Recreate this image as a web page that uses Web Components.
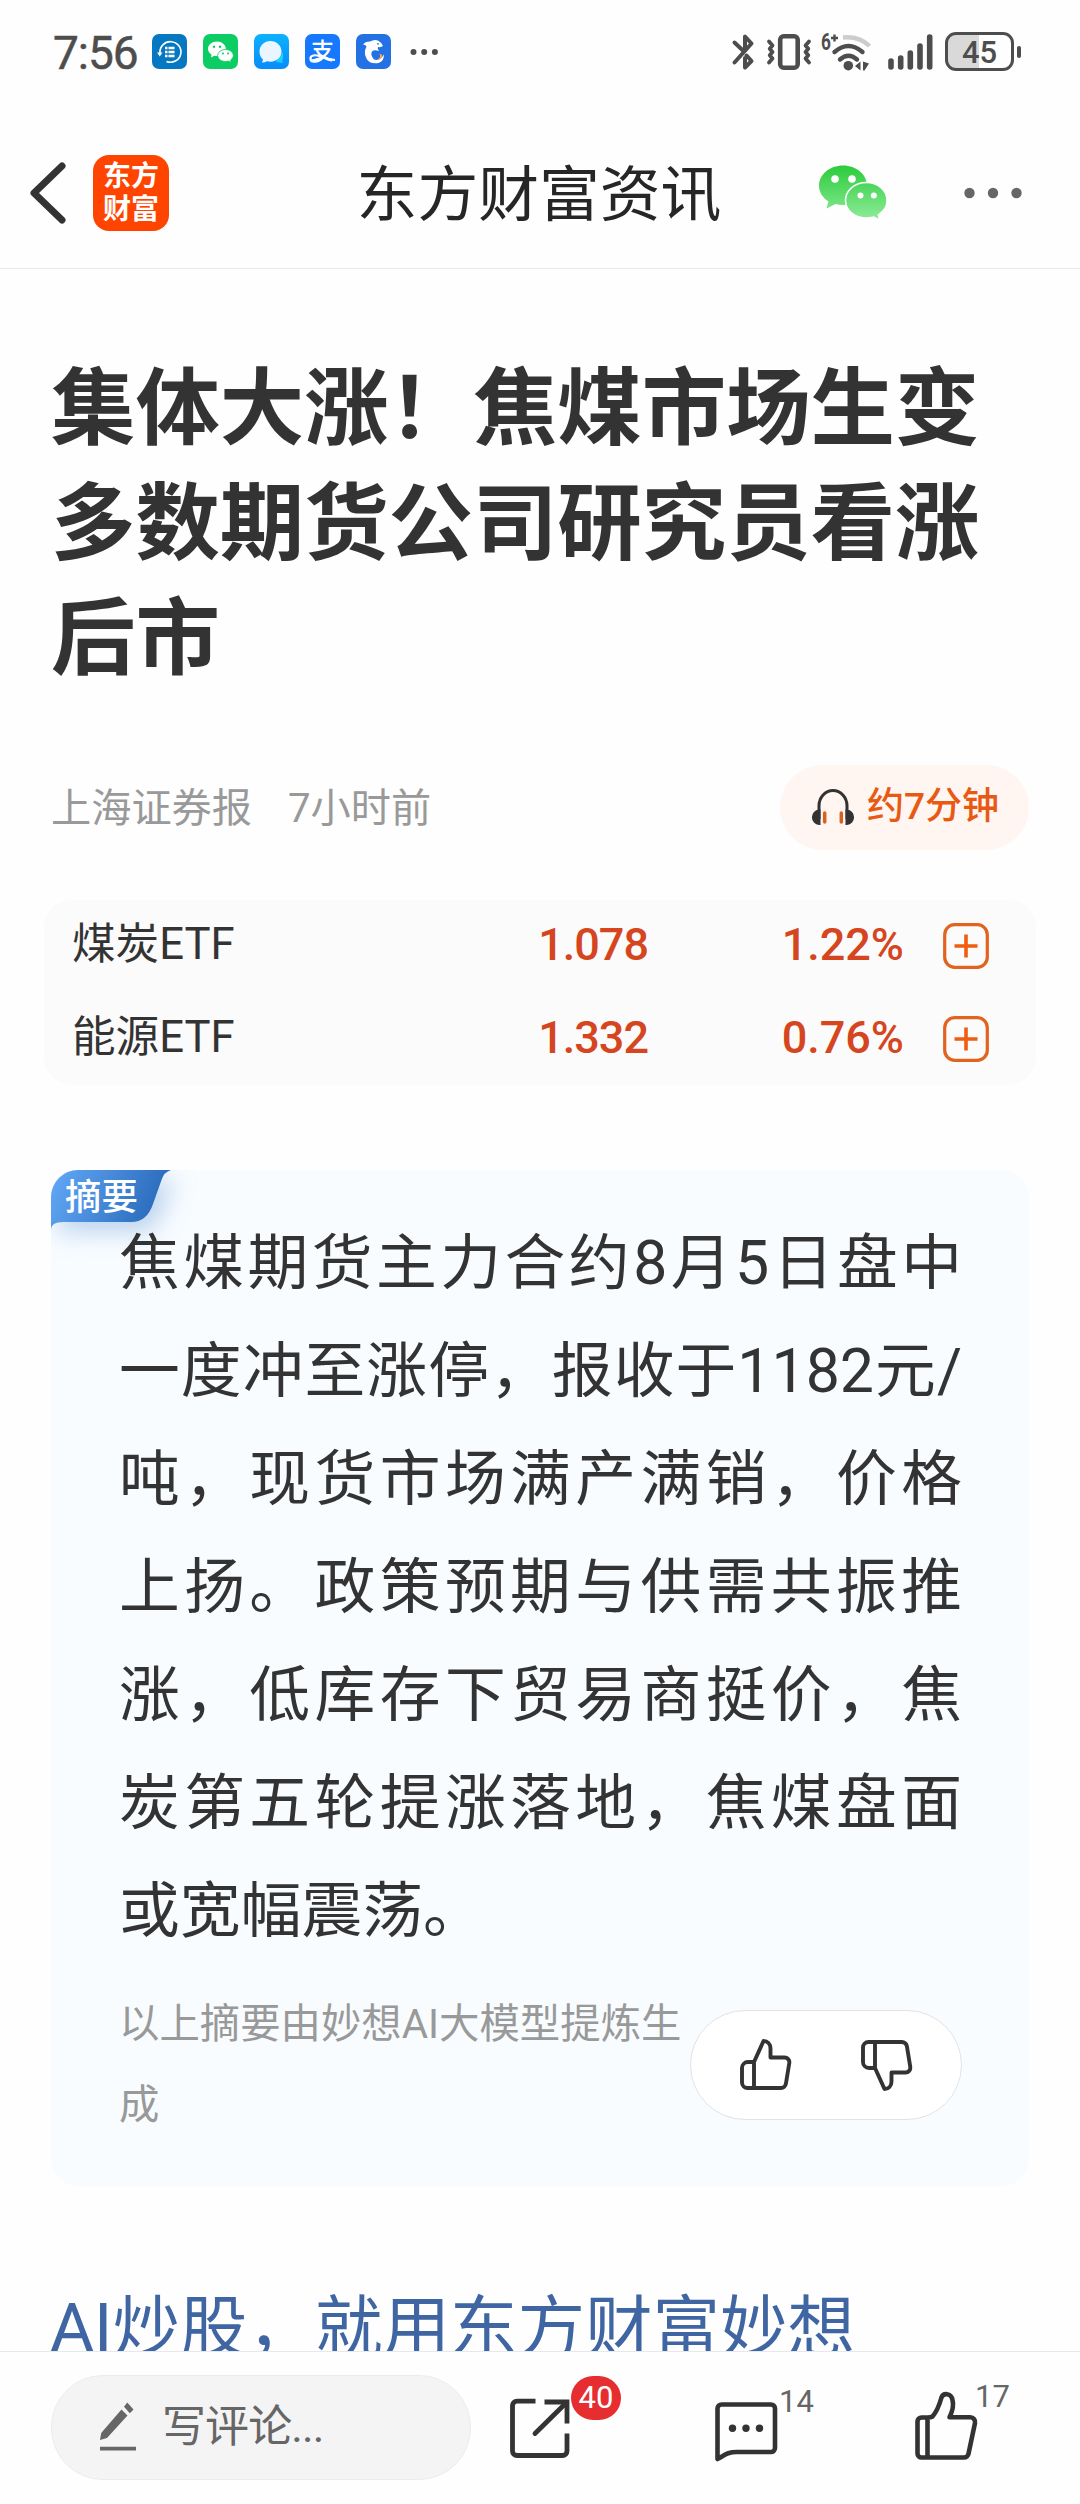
<!DOCTYPE html>
<html lang="zh-CN">
<head>
<meta charset="utf-8">
<title>东方财富资讯</title>
<style>
  html, body { margin: 0; padding: 0; }
  body {
    width: 1080px;
    height: 2504px;
    overflow: hidden;
    background: #fefefe;
    color: #333333;
    font-family: Roboto, "Noto Sans CJK SC", sans-serif;
    text-spacing-trim: space-all;
    text-autospace: no-autospace;
  }
</style>
</head>
<body>
<news-page>
  <status-bar slot="top" time="7:56" battery="45"></status-bar>
  <nav-bar slot="top">东方财富资讯</nav-bar>
  <article-head source="上海证券报" time="7小时前" duration="约7分钟">集体大涨！焦煤市场生变 多数期货公司研究员看涨后市</article-head>
  <quote-list>
    <quote-row name="煤炭ETF" price="1.078" change="1.22%"></quote-row>
    <quote-row name="能源ETF" price="1.332" change="0.76%"></quote-row>
  </quote-list>
  <summary-card label="摘要">
    焦煤期货主力合约8月5日盘中一度冲至涨停，报收于1182元/吨，现货市场满产满销，价格上扬。政策预期与供需共振推涨，低库存下贸易商挺价，焦炭第五轮提涨落地，焦煤盘面或宽幅震荡。
    <span slot="note">以上摘要由妙想AI大模型提炼生成</span>
  </summary-card>
  <promo-link>AI炒股，就用东方财富妙想</promo-link>
  <comment-bar slot="bottom" placeholder="写评论..."></comment-bar>
</news-page>

<script>
const ICONS = {
    bluetooth: [22, 36, `<path d="M2.5 8.5L12 17.5M2.5 28.5L19.5 9.500L13 2.500V16M13 33.500V24M13 33.500L19.500 27L14.500 21.500" stroke="currentColor" stroke-width="4" stroke-linecap="round" stroke-linejoin="round" fill="none"/>`],
    vibrate: [44, 36, `<g stroke="currentColor" fill="none" stroke-linecap="round" stroke-linejoin="round"><rect x="13.200" y="2.300" width="17.500" height="31.400" rx="3.500" stroke-width="4.600"/><path d="M2 7.500l3.500 4-2.800 3.200 2.800 3.300-2.800 3.300 2.800 3.200-3.500 4M42 7.500l-3.500 4 2.800 3.200-2.800 3.300 2.800 3.300-2.800 3.200 3.500 4" stroke-width="3.800"/></g>`],
    wifi: [52, 38, `<g fill="none" stroke="currentColor" stroke-width="4.400" stroke-linecap="round"><path d="M22 4.500Q38 3 48.500 13" stroke="#cccccc" stroke-linecap="butt"/><path d="M13.500 19Q27.500 7 41.500 19M19 26.500Q27.500 19 36 26.500"/></g><circle cx="27.300" cy="32.700" r="4.800" fill="currentColor"/><path d="M39.500 28.500v9l-5.500-4.500zM42 28.500l6 2-4.500 7h-1.500z" fill="currentColor"/><path d="M10 5h7M13.500 1.500v7" stroke="currentColor" stroke-width="2.400"/><text x="0" y="17" font-size="23" font-weight="700" fill="currentColor" transform="scale(.75 1)">6</text>`],
    signal: [45, 36, `<path d="M3 27v6M12.700 24v9M22.300 19v14M32 12v21M41.700 3v30" stroke="currentColor" stroke-width="5.600" stroke-linecap="round"/>`],
    back: [36, 62, `<path d="M32 4L4 31L32 58" fill="none" stroke="#333333" stroke-width="7" stroke-linecap="round" stroke-linejoin="round"/>`],
    wechat: [68, 56, `<defs><linearGradient id="g" x1="0" y1="0" x2="0" y2="56" gradientUnits="userSpaceOnUse"><stop stop-color="#2bcb3a"/><stop offset="1" stop-color="#90ec9b"/></linearGradient></defs><g fill="url(#g)"><path d="M24 .5C10.700 .5 0 9.500 0 20.700c0 6.500 3.800 12 9.500 15.800L7.500 43.500l9-4.500c2.400.6 5 1 7.500 1 13 0 24-8.500 24-19.500S37.300.5 24 .5z"/><path d="M47.500 17.500C36 17.500 26.500 25.300 26.500 35.500S36 53 47.500 53c2.600 0 5-.4 7.300-1l6.200 3.500-1.700-5.600c5.300-3.300 8.700-8.500 8.700-14.400 0-10.200-9.200-18-20.500-18z" stroke="#ffffff" stroke-width="1.500"/></g><g fill="#ffffff"><circle cx="16" cy="14" r="3.800"/><circle cx="33" cy="14" r="3.800"/><circle cx="41.500" cy="30.500" r="3"/><circle cx="54.800" cy="30.500" r="3"/></g>`],
    more: [58, 12, `<g fill="#666666"><circle cx="5.500" cy="6" r="5.200"/><circle cx="29" cy="6" r="5.200"/><circle cx="52.500" cy="6" r="5.200"/></g>`],
    headphones: [44, 37, `<path d="M8 30V17a14 15.500 0 0 1 28 0v13" fill="none" stroke="#333333" stroke-width="3"/><path d="M9.500 20.500V36H8A8 7.800 0 0 1 8 20.500zM34.500 20.500V36H36A8 7.800 0 0 0 36 20.500z" fill="#333333"/><path d="M13.700 24v9M30.300 24v9" stroke="#d9611f" stroke-width="3.500" stroke-linecap="round"/>`],
    plus: [46, 46, `<path d="M23 11.500v23M11.500 23h23" stroke="#f05c10" stroke-width="3.600"/><rect x="1.700" y="1.700" width="42.600" height="42.600" rx="10" fill="none" stroke="#e0631f" stroke-width="3.200"/>`],
    up: [52, 52, `<path d="M14 23H8a6 6 0 0 0-6 6v14.500a5.500 5.500 0 0 0 5.500 5.500H41a5 5 0 0 0 4.900-4.200L49.300 24a4.800 4.800 0 0 0-4.800-5.500H30.500V9.500C30.500 5 27.500 2 23.500 2L14 23V49" fill="none" stroke="#333333" stroke-width="3.900" stroke-linejoin="round"/>`],
    down: [52, 52, `<path transform="matrix(1 0 0 -1 0 52)" d="M14 23H8a6 6 0 0 0-6 6v14.500a5.500 5.500 0 0 0 5.500 5.500H41a5 5 0 0 0 4.900-4.200L49.300 24a4.800 4.800 0 0 0-4.800-5.500H30.500V9.500C30.500 5 27.500 2 23.500 2L14 23V49" fill="none" stroke="#333333" stroke-width="3.900" stroke-linejoin="round"/>`],
    pencil: [37, 50, `<path d="M0 38L1.200 31L21.500 7.500L27.500 13.500L7 36zM27.200 .5L33.500 7.500L29.800 11.300L24 4.800zM0 44.800h36v3.800H0z" fill="#666666"/>`],
    share: [60, 61, `<path d="M25.500 3.200H7A4.500 4.500 0 0 0 2.500 7.700V53A4.500 4.500 0 0 0 7 57.500H52.500A4.500 4.500 0 0 0 57 53V35.500M34.500 4H57V25.500" fill="none" stroke="#333333" stroke-width="4.800"/><path d="M56 5L25 35.500" stroke="#333333" stroke-width="4.800" stroke-linecap="round"/>`],
    comment: [63, 60, `<path d="M2.500 57V6.500a4 4 0 0 1 4-4h49.500a4 4 0 0 1 4 4V46a4 4 0 0 1-4 4H22c-10 0-12 3-19.500 7z" fill="none" stroke="#333333" stroke-width="4.600" stroke-linejoin="round"/><g fill="#333333"><circle cx="17.500" cy="26.300" r="3.700"/><circle cx="31" cy="26.300" r="3.700"/><circle cx="44.500" cy="26.300" r="3.700"/></g>`],
    like: [63, 69, `<path d="M12.500 25.500H6.500a4 4 0 0 0-4 4V61.500a4 4 0 0 0 4 4H49a4.500 4.500 0 0 0 4.500-3.700L60 31a4.800 4.800 0 0 0-4.700-5.700H34.500Q39.500 15 37.500 8C36 .5 28 .7 26.300 6Q23 18 17.500 24.500 16 25.500 12.500 25.500V65.500" fill="none" stroke="#333333" stroke-width="4.600" stroke-linejoin="round"/>`],
    // launcher icons in the notification area
    backup: [35, 35, `<rect width="35" height="35" rx="7" fill="#0678c2"/><path d="M8 19A10.500 10.300 0 1 1 14.500 27.500" fill="none" stroke="#ffffff" stroke-width="1.600"/><path d="M5 18.500h5.500l-2.700 4z" fill="#ffffff"/><path d="M13 14h2.500M16.500 14h6M13 18h2.500M16.500 18h6M13 22h2.500M16.500 22h6" stroke="#ffffff" stroke-width="2.600"/>`],
    wechatApp: [35, 35, `<rect width="35" height="35" rx="7" fill="#0ccd64"/><g fill="#ffffff"><path d="M14 7.500c-5 0-9 3.300-9 7.300 0 2.500 1.400 4.500 3.500 5.800l-.5 3 3.300-1.800q4 .8 7-.8c3-1.500 4.500-3.500 4.500-6.200 0-4-4-7.300-8.800-7.300z"/><path d="M22.500 15.500c-4.300 0-7.800 2.600-7.800 6s3.500 6 7.800 6l3-.5 2.500 1.500-.4-2.500c1.700-1.200 2.700-2.700 2.700-4.500 0-3.400-3.500-6-7.800-6z" stroke="#0ccd64" stroke-width=".8"/></g><g fill="#0ccd64"><circle cx="11" cy="12.700" r="1.200"/><circle cx="17" cy="12.700" r="1.200"/><circle cx="20" cy="19.500" r="1"/><circle cx="25" cy="19.500" r="1"/></g>`],
    message: [35, 35, `<defs><linearGradient id="m" x2="0" y2="1"><stop stop-color="#0db2fd"/><stop offset="1" stop-color="#078cfb"/></linearGradient></defs><rect width="35" height="35" rx="7" fill="url(#m)"/><path d="M29 18l-7 10 7 1q-1.500-2 0-4.500z" fill="#18d0fb"/><path d="M16.500 7C10.500 7 5.500 11.500 5.500 17.500c0 3.500 1.300 6 3.500 8L8 28.500q3 0 5-1.300c8 2 14.500-3 14.500-9.700C27.500 11.500 22.500 7 16.500 7z" fill="#e9f5ff"/>`],
    alipay: [35, 35, `<rect width="35" height="35" rx="7" fill="#1677ff"/><text x="17.500" y="25" font-size="23" font-weight="500" text-anchor="middle" fill="#ffffff">支</text><path d="M15 22.500c-5-2.500-10-1-9.500 2.500.5 4 8.500 3.500 13-2M16 21.500q7 4 14 4.500" fill="none" stroke="#ffffff" stroke-width="2.200"/>`],
    dolphin: [35, 35, `<rect width="35" height="35" rx="7" fill="#2371e4"/><path d="M7 10.500Q9 7.500 14 7.500Q18 5 22 6.500Q25 8 27 12Q25 13.500 22 13Q21 14.500 23 17Q18 15.500 16 17.500Q14 21 18 25.500Q24 27.500 27.800 20.500Q28.500 27 22.500 29Q15 30.500 11 25.500Q7 19 10.500 12.500Q9.500 10.500 7 10.500z" fill="#ffffff"/><path d="M20.500 26Q25.500 24 23.500 19.500Q27.500 21 26 23.500Q24 26 20.500 26z" fill="#f6a45c"/><circle cx="22" cy="9.800" r=".9" fill="#2371e4"/>`],
    dots: [28, 8, `<g fill="currentColor"><circle cx="3.500" cy="4" r="3"/><circle cx="14.200" cy="4" r="3"/><circle cx="24.900" cy="4" r="3"/></g>`],
    tab: [120, 60, `<defs><linearGradient id="t" x1="0" y1="0" x2="105" y2="45" gradientUnits="userSpaceOnUse"><stop stop-color="#63a9f7"/><stop offset="1" stop-color="#2a6bbb"/></linearGradient></defs><path d="M0 20A20 20 0 0 1 20 0H120Q113 2 110.500 10L102 34Q96 52 80 52H12Q0 52 0 60z" fill="url(#t)"/>`]
};

class NewsIcon extends HTMLElement {
    constructor() {
        super();
        this.attachShadow({ mode: 'open' });
    }

    get type() {
        return this.getAttribute('type');
    }

    connectedCallback() {
        const [w, h, body] = ICONS[this.type];
        this.shadowRoot.innerHTML = `
        <style>
          :host { display: block; flex: none; width: ${w}px; height: ${h}px; }
          svg { display: block; overflow: visible; }
        </style>
        <svg width="${w}" height="${h}" viewBox="0 0 ${w} ${h}">${body}</svg>
      `;
    }
}
customElements.define('news-icon', NewsIcon);

class NewsPage extends HTMLElement {
    constructor() {
        super();
        this.attachShadow({ mode: 'open' }).innerHTML = `
        <style>
          :host { display: flex; flex-direction: column; height: 2504px; }
          main { flex: 1; min-height: 0; overflow: hidden; }
        </style>
        <slot name="top"></slot>
        <main><slot></slot></main>
        <slot name="bottom"></slot>
      `;
    }
}
customElements.define('news-page', NewsPage);

class StatusBar extends HTMLElement {
    connectedCallback() {
        this.attachShadow({ mode: 'open' }).innerHTML = `
        <style>
          :host {
            display: flex;
            align-items: center;
            box-sizing: border-box;
            height: 118px;
            padding: 0 59px 15px 53px;
            color: #4d4d4d;
          }
          .time { width: 99px; padding-top: 2px; font-size: 46px; letter-spacing: -1px; -webkit-text-stroke: .5px #4d4d4d; white-space: nowrap; }
          .apps { display: flex; align-items: center; gap: 16px; flex: 1; }
          .state { display: flex; align-items: center; }
          .battery {
            display: flex;
            align-items: center;
            justify-content: center;
            box-sizing: border-box;
            width: 69px;
            height: 39px;
            margin-left: 12px;
            border: 3px solid #4d4d4d;
            border-radius: 11px;
            background: linear-gradient(90deg, #d9d9d9 50%, transparent 50%);
            font-size: 31px;
            font-weight: 500;
          }
          .battery span { margin-top: 2px; }
          .nub { width: 4px; height: 12px; margin-left: 3px; border-radius: 2px; background: #4d4d4d; }
        </style>
        <span class="time">${this.getAttribute('time')}</span>
        <div class="apps">
          <news-icon type="backup"></news-icon>
          <news-icon type="wechatApp"></news-icon>
          <news-icon type="message"></news-icon>
          <news-icon type="alipay"></news-icon>
          <news-icon type="dolphin"></news-icon>
          <news-icon type="dots" style="margin-left:3px"></news-icon>
        </div>
        <div class="state">
          <news-icon type="bluetooth"></news-icon>
          <news-icon type="vibrate" style="margin-left:13px"></news-icon>
          <news-icon type="wifi" style="margin-left:10px"></news-icon>
          <news-icon type="signal" style="margin-left:15px"></news-icon>
          <div class="battery"><span>${this.getAttribute('battery')}</span></div>
          <span class="nub"></span>
        </div>
      `;
    }
}
customElements.define('status-bar', StatusBar);

class NavBar extends HTMLElement {
    constructor() {
        super();
        this.attachShadow({ mode: 'open' }).innerHTML = `
        <style>
          :host {
            display: grid;
            grid-template-columns: 1fr auto 1fr;
            align-items: center;
            box-sizing: border-box;
            height: 151px;
            padding: 0 58px 0 30px;
            border-bottom: 1px solid #e9e9e9;
          }
          .left { display: flex; align-items: center; gap: 27px; margin-top: -1px; }
          .right { display: flex; align-items: center; justify-content: flex-end; gap: 77px; }
          .logo {
            display: grid;
            align-content: center;
            justify-content: center;
            width: 76px;
            height: 76px;
            border-radius: 16px;
            background: #ff4400;
            color: #ffffff;
            font-size: 28px;
            font-weight: 700;
            line-height: 33px;
          }
          h2 { margin: 5px 0 0 26px; color: #262626; font-size: 60.8px; font-weight: 400; line-height: 80px; }
        </style>
        <div class="left">
          <news-icon type="back"></news-icon>
          <div class="logo"><span>东方</span><span>财富</span></div>
        </div>
        <h2><slot></slot></h2>
        <div class="right">
          <news-icon type="wechat"></news-icon>
          <news-icon type="more"></news-icon>
        </div>
      `;
    }
}
customElements.define('nav-bar', NavBar);

class ArticleHead extends HTMLElement {
    connectedCallback() {
        this.attachShadow({ mode: 'open' }).innerHTML = `
        <style>
          :host { display: block; padding: 83px 51px 0; }
          h1 { width: 940px; margin: 0; font-size: 84.4px; font-weight: 700; line-height: 115px; }
          .meta { display: flex; align-items: center; height: 85px; margin-top: 68px; color: #999999; font-size: 40.2px; }
          .meta > span { margin-top: -7px; }
          .meta > .time { flex: 1; margin-left: 36px; }
          .listen {
            display: flex;
            align-items: center;
            box-sizing: border-box;
            width: 249px;
            height: 85px;
            padding-left: 31px;
            border-radius: 43px;
            background: #fff5f1;
            color: #e85a14;
            font-size: 37px;
            font-weight: 500;
          }
          .listen span { margin: -9px 0 0 12px; }
        </style>
        <h1><slot></slot></h1>
        <div class="meta">
          <span>${this.getAttribute('source')}</span>
          <span class="time">${this.getAttribute('time')}</span>
          <div class="listen"><news-icon type="headphones"></news-icon><span>${this.getAttribute('duration')}</span></div>
        </div>
      `;
    }
}
customElements.define('article-head', ArticleHead);

class QuoteList extends HTMLElement {
    constructor() {
        super();
        this.attachShadow({ mode: 'open' }).innerHTML = `
        <style>
          :host {
            display: block;
            margin: 50px 44px 0;
            border-radius: 28px;
            background: #fbfbfb;
          }
        </style>
        <slot></slot>
      `;
    }
}
customElements.define('quote-list', QuoteList);

class QuoteRow extends HTMLElement {
    connectedCallback() {
        this.attachShadow({ mode: 'open' }).innerHTML = `
        <style>
          :host {
            display: grid;
            grid-template-columns: 301px 274px 257px 46px;
            align-items: center;
            height: 92.6px;
            padding-left: 28px;
            font-size: 43.6px;
            line-height: 60px;
          }
          span { margin-top: -2px; }
          .num { color: #d54620; font-size: 45px; font-weight: 500; text-align: right; }
          .price { letter-spacing: -1px; margin-right: -1px; }
          news-icon { margin-left: 39px; }
        </style>
        <span>${this.getAttribute('name')}</span>
        <span class="num price">${this.getAttribute('price')}</span>
        <span class="num">${this.getAttribute('change')}</span>
        <news-icon type="plus"></news-icon>
      `;
    }
}
customElements.define('quote-row', QuoteRow);

class SummaryCard extends HTMLElement {
    connectedCallback() {
        this.attachShadow({ mode: 'open' }).innerHTML = `
        <style>
          :host {
            display: block;
            position: relative;
            box-sizing: border-box;
            width: 978px;
            height: 1016px;
            margin: 85px 0 0 51px;
            padding: 40px 67px 0 68px;
            border-radius: 27px;
            background: #f8fcff;
            overflow: hidden;
          }
          .tab { position: absolute; left: 0; top: 0; }
          .tab news-icon { filter: drop-shadow(8px 10px 12px rgba(50, 120, 200, .3)); }
          .tab span { position: absolute; left: 14px; top: 0; color: #ffffff; font-size: 36.5px; font-weight: 500; line-height: 55px; white-space: nowrap; }
          p { position: relative; margin: 0; font-size: 60.8px; line-height: 108px; text-align: justify; }
          .foot { display: flex; align-items: center; margin-top: 18px; }
          .note { flex: 1; color: #999999; font-size: 40.4px; line-height: 81px; }
          .vote {
            display: flex;
            align-items: center;
            gap: 69px;
            box-sizing: border-box;
            width: 272px;
            height: 110px;
            padding-left: 49px;
            border: 1px solid #e2e2e2;
            border-radius: 55px;
            background: #ffffff;
          }
        </style>
        <div class="tab"><news-icon type="tab"></news-icon><span>${this.getAttribute('label')}</span></div>
        <p><slot></slot></p>
        <div class="foot">
          <div class="note"><slot name="note"></slot></div>
          <div class="vote"><news-icon type="up"></news-icon><news-icon type="down"></news-icon></div>
        </div>
      `;
    }
}
customElements.define('summary-card', SummaryCard);

class PromoLink extends HTMLElement {
    constructor() {
        super();
        this.attachShadow({ mode: 'open' }).innerHTML = `
        <style>
          :host { display: block; margin: 92px 0 0 50px; color: #3f65a3; font-size: 67.5px; line-height: 100px; white-space: nowrap; }
        </style>
        <slot></slot>
      `;
    }
}
customElements.define('promo-link', PromoLink);

class CommentBar extends HTMLElement {
    connectedCallback() {
        this.attachShadow({ mode: 'open' }).innerHTML = `
        <style>
          :host {
            display: flex;
            align-items: flex-start;
            box-sizing: border-box;
            height: 153px;
            padding: 23px 0 0 51px;
            border-top: 1px solid #e8e8e8;
            background: #fefefe;
          }
          .input {
            display: flex;
            align-items: center;
            gap: 25px;
            box-sizing: border-box;
            width: 420px;
            height: 105px;
            padding-left: 48px;
            border: 1px solid #ececec;
            border-radius: 52px;
            background: #f4f4f4;
            color: #666666;
            font-size: 44px;
            letter-spacing: -.9px;
          }
          .input news-icon { margin-top: -2px; }
          .input span { margin-top: -10px; }
          .action { position: relative; }
          .count { position: absolute; left: 64px; top: -18px; color: #666666; font-size: 31px; line-height: 36px; }
          .badge {
            position: absolute;
            left: 61px;
            top: -22px;
            width: 50px;
            height: 44px;
            border-radius: 22px;
            background: #e62e30;
            color: #ffffff;
            font-size: 31px;
            line-height: 43px;
            text-align: center;
          }
        </style>
        <div class="input"><news-icon type="pencil"></news-icon><span>${this.getAttribute('placeholder')}</span></div>
        <div class="action" style="margin:23px 0 0 39px"><news-icon type="share"></news-icon><span class="badge">40</span></div>
        <div class="action" style="margin:27px 0 0 145px"><news-icon type="comment"></news-icon><span class="count">14</span></div>
        <div class="action" style="margin:17px 0 0 137px"><news-icon type="like"></news-icon><span class="count" style="left:60px;top:-13px">17</span></div>
      `;
    }
}
customElements.define('comment-bar', CommentBar);
</script>
</body>
</html>
